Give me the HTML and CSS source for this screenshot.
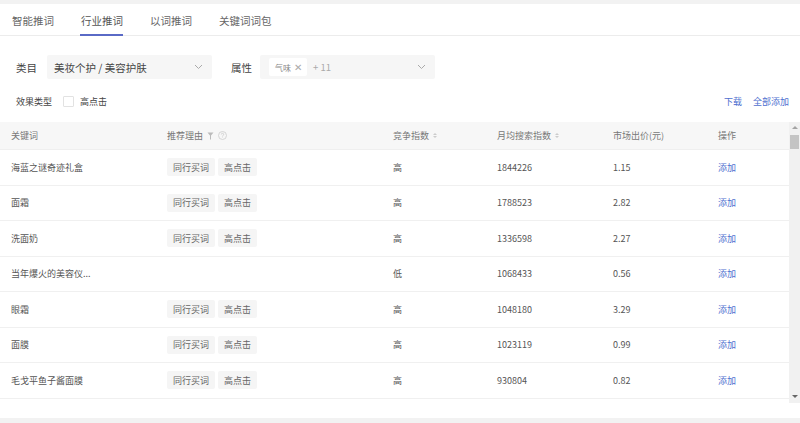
FILE: index.html
```html
<!DOCTYPE html>
<html lang="zh">
<head>
<meta charset="utf-8">
<link rel="stylesheet" href="styles.css">
</head>
<body>
<div class="card">
  <div class="tabs">
    <div class="tab">智能推词</div>
    <div class="tab active">行业推词</div>
    <div class="tab">以词推词</div>
    <div class="tab">关键词词包</div>
  </div>

  <div class="filters">
    <span class="flabel">类目</span>
    <div class="select sel-cat">
      <span>美妆个护 / 美容护肤</span>
      <svg class="chev" width="9" height="6" viewBox="0 0 9 6"><path d="M1 1l3.5 3.5L8 1" fill="none" stroke="#aaa" stroke-width="1"/></svg>
    </div>
    <span class="flabel attr">属性</span>
    <div class="select sel-attr">
      <span class="tag-x">气味 <span class="x">✕</span></span>
      <span class="more">+ 11</span>
      <svg class="chev" width="9" height="6" viewBox="0 0 9 6"><path d="M1 1l3.5 3.5L8 1" fill="none" stroke="#aaa" stroke-width="1"/></svg>
    </div>
  </div>

  <div class="opts">
    <span class="olabel">效果类型</span>
    <span class="checkbox"></span>
    <span class="olabel">高点击</span>
    <span class="spacer"></span>
    <a class="link">下载</a>
    <a class="link">全部添加</a>
  </div>

  <div class="tablewrap">
    <div class="table">
      <div class="row head">
        <div class="c c1">关键词</div>
        <div class="c c2">推荐理由
          <svg class="ico" width="7" height="8" viewBox="0 0 7 8"><path d="M0.5 0.5h6L4 3.5v4H3v-4z" fill="#bbb"/></svg>
          <svg class="ico" width="9" height="9" viewBox="0 0 9 9"><circle cx="4.5" cy="4.5" r="4" fill="none" stroke="#ccc" stroke-width="0.8"/><path d="M3.3 3.5a1.2 1.2 0 1 1 1.6 1.1c-.3.1-.4.3-.4.6v.3" fill="none" stroke="#ccc" stroke-width="0.8"/><circle cx="4.5" cy="6.7" r="0.4" fill="#ccc"/></svg>
        </div>
        <div class="c c3">竞争指数 <span class="sort"><i class="up"></i><i class="dn"></i></span></div>
        <div class="c c4">月均搜索指数 <span class="sort"><i class="up"></i><i class="dn"></i></span></div>
        <div class="c c5">市场出价(元)</div>
        <div class="c c6">操作</div>
      </div>

      <div class="row">
        <div class="c c1">海蓝之谜奇迹礼盒</div>
        <div class="c c2"><span class="tag">同行买词</span><span class="tag">高点击</span></div>
        <div class="c c3">高</div>
        <div class="c c4">1844226</div>
        <div class="c c5">1.15</div>
        <div class="c c6"><a class="link">添加</a></div>
      </div>
      <div class="row">
        <div class="c c1">面霜</div>
        <div class="c c2"><span class="tag">同行买词</span><span class="tag">高点击</span></div>
        <div class="c c3">高</div>
        <div class="c c4">1788523</div>
        <div class="c c5">2.82</div>
        <div class="c c6"><a class="link">添加</a></div>
      </div>
      <div class="row">
        <div class="c c1">洗面奶</div>
        <div class="c c2"><span class="tag">同行买词</span><span class="tag">高点击</span></div>
        <div class="c c3">高</div>
        <div class="c c4">1336598</div>
        <div class="c c5">2.27</div>
        <div class="c c6"><a class="link">添加</a></div>
      </div>
      <div class="row">
        <div class="c c1">当年爆火的美容仪...</div>
        <div class="c c2"></div>
        <div class="c c3">低</div>
        <div class="c c4">1068433</div>
        <div class="c c5">0.56</div>
        <div class="c c6"><a class="link">添加</a></div>
      </div>
      <div class="row">
        <div class="c c1">眼霜</div>
        <div class="c c2"><span class="tag">同行买词</span><span class="tag">高点击</span></div>
        <div class="c c3">高</div>
        <div class="c c4">1048180</div>
        <div class="c c5">3.29</div>
        <div class="c c6"><a class="link">添加</a></div>
      </div>
      <div class="row">
        <div class="c c1">面膜</div>
        <div class="c c2"><span class="tag">同行买词</span><span class="tag">高点击</span></div>
        <div class="c c3">高</div>
        <div class="c c4">1023119</div>
        <div class="c c5">0.99</div>
        <div class="c c6"><a class="link">添加</a></div>
      </div>
      <div class="row">
        <div class="c c1">毛戈平鱼子酱面膜</div>
        <div class="c c2"><span class="tag">同行买词</span><span class="tag">高点击</span></div>
        <div class="c c3">高</div>
        <div class="c c4">930804</div>
        <div class="c c5">0.82</div>
        <div class="c c6"><a class="link">添加</a></div>
      </div>
    </div>
    <div class="scrollbar">
      <span class="arrow aup"></span>
      <span class="thumb"></span>
      <span class="track"></span>
      <span class="arrow adn"></span>
    </div>
  </div>
</div>
</body>
</html>
```

FILE: styles.css
```css
* { box-sizing: border-box; }
html, body { margin: 0; padding: 0; }
body {
  width: 800px;
  height: 423px;
  background: #f2f2f2;
  padding-top: 4px;
  font-family: "Noto Sans CJK SC", "Noto Sans", sans-serif;
  color: #555;
  overflow: hidden;
}
.card {
  background: #fff;
  height: 414px;
  display: flex;
  flex-direction: column;
}
.tabs {
  display: flex;
  gap: 27px;
  padding-left: 12px;
  height: 32px;
  border-bottom: 1px solid #ececec;
  align-items: stretch;
  flex: none;
}
.tab {
  font-size: 10.5px;
  color: #666;
  display: flex;
  align-items: center;
  padding-top: 2px;
  position: relative;
}
.tab.active { color: #555; }
.tab.active::after {
  content: "";
  position: absolute;
  left: -1px;
  right: 0;
  bottom: -1px;
  height: 2px;
  background: #5a6ac6;
}
.filters {
  display: flex;
  align-items: center;
  padding: 19px 0 0 16px;
  height: 43px;
  flex: none;
}
.flabel {
  font-size: 10.5px;
  color: #444;
  margin-right: 10px;
}
.flabel.attr { margin-left: 19px; margin-right: 8px; }
.select {
  height: 24px;
  background: #f6f6f6;
  border-radius: 2px;
  display: flex;
  align-items: center;
  padding-left: 7px;
  padding-right: 9px;
  font-size: 10.5px;
  color: #444;
}
.sel-cat { width: 165px; }
.sel-attr { width: 175px; padding-left: 9px; }
.chev { margin-left: auto; }
.tag-x {
  background: #fff;
  font-size: 8px;
  color: #888;
  height: 18px;
  padding: 0 5px 0 6px;
  display: flex;
  align-items: center;
  border-radius: 2px;
}
.tag-x .x { font-size: 9.5px; margin-left: 3px; color: #aaa; }
.more { font-size: 9.5px; color: #aaa; margin-left: 6px; }
.opts {
  display: flex;
  align-items: center;
  padding: 1px 11px 0 16px;
  height: 43px;
  flex: none;
}
.olabel { font-size: 9px; color: #444; }
.checkbox {
  width: 11px;
  height: 11px;
  border: 1px solid #e2e2e2;
  border-radius: 1px;
  margin: 0 6px 0 11px;
  background: #fff;
}
.spacer { flex: 1; }
.link {
  color: #4f70cf;
  font-size: 9px;
  text-decoration: none;
  cursor: pointer;
}
.opts .link + .link { margin-left: 11px; }
.tablewrap {
  display: flex;
  height: 282px;
  overflow: hidden;
  flex: none;
}
.table {
  flex: 1;
  display: flex;
  flex-direction: column;
}
.row {
  display: flex;
  align-items: center;
  height: 35.5px;
  flex: none;
  border-bottom: 1px solid #f0f0f0;
  font-size: 9px;
  color: #555;
}
.row.head {
  height: 28px;
  background: #f7f7f7;
  color: #777;
  border-bottom: 1px solid #efefef;
}
.c { padding-left: 11px; display: flex; align-items: center; white-space: nowrap; }
.c1 { width: 156px; }
.c2 { width: 226px; gap: 3px; }
.c3 { width: 104px; }
.c4 { width: 116px; }
.c5 { width: 105px; }
.c6 { flex: 1; }
.head .c2 { gap: 0; }
.ico { margin-left: 4px; }
.tag {
  background: #f5f5f5;
  color: #666;
  padding: 0 6px;
  height: 18px;
  display: inline-flex;
  align-items: center;
  border-radius: 2px;
}
.sort {
  display: inline-flex;
  flex-direction: column;
  gap: 1px;
  margin-left: 4px;
}
.sort i {
  width: 0; height: 0;
  border-left: 2px solid transparent;
  border-right: 2px solid transparent;
}
.sort .up { border-bottom: 2.5px solid #ccc; }
.sort .dn { border-top: 2.5px solid #ccc; }
.scrollbar {
  width: 11px;
  height: 281px;
  background: #f1f1f1;
  display: flex;
  flex-direction: column;
  align-items: center;
}
.arrow {
  width: 0; height: 0;
  border-left: 3px solid transparent;
  border-right: 3px solid transparent;
  flex: none;
}
.aup { border-bottom: 3px solid #a3a3a3; margin-top: 4px; }
.adn { border-top: 3px solid #666; margin-bottom: 5px; }
.thumb {
  width: 9px;
  height: 14px;
  background: #c4c4c4;
  margin-top: 6px;
  flex: none;
}
.track { flex: 1; }
```
